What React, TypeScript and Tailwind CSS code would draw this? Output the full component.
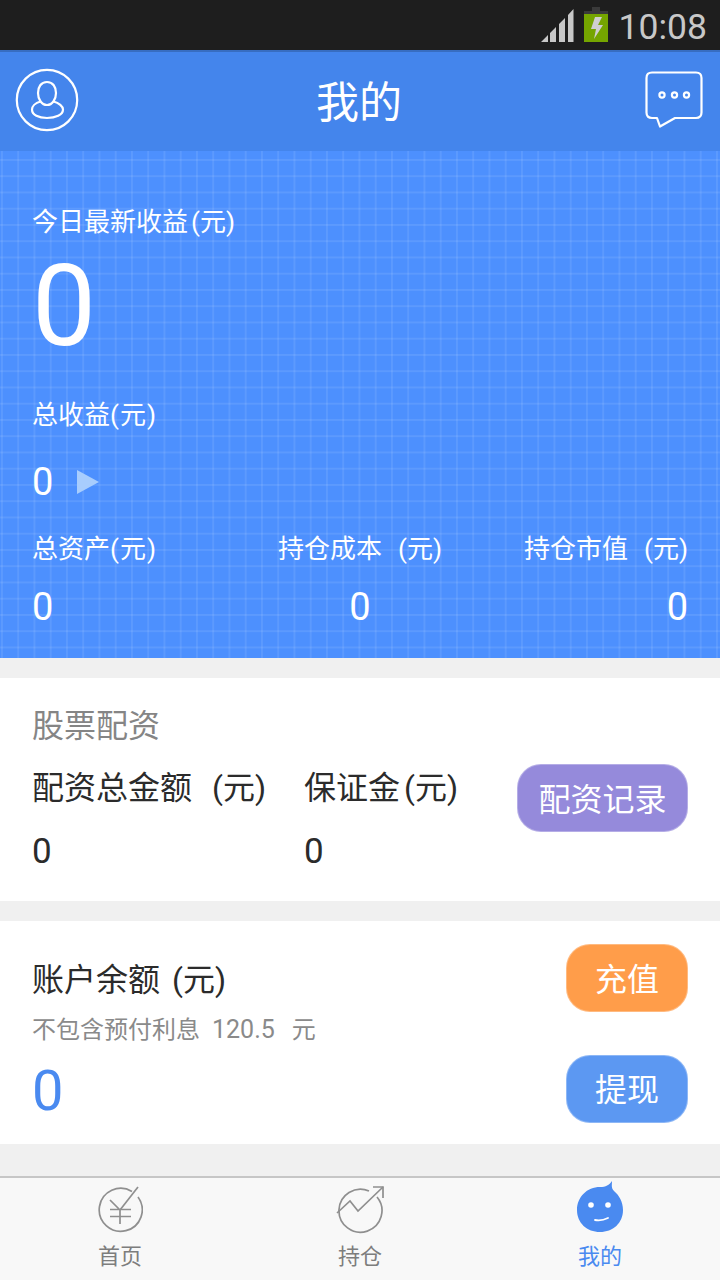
const font = { fontFamily: '"Roboto", "Noto Sans CJK SC", sans-serif' };

function SignalIcon() {
  return (
    <svg width="34" height="34" viewBox="0 0 34 34" className="mt-[9px]">
      <path d="M1 33 L8 33 L8 26 Z M10 33 L16 33 L16 18 L10 24 Z M19 33 L25 33 L25 9 L19 15 Z M28 33 L33.500 33 L33.500 0 L28 6 Z" fill="#c8c8c8" />
    </svg>
  );
}

function BatteryIcon() {
  return (
    <svg width="24" height="36" viewBox="0 0 24 36" className="mt-[6px]">
      <rect x="8" y="1" width="8" height="4" fill="#3a3a3a" />
      <rect x="0" y="5" width="24" height="31" fill="#75a500" />
      <rect x="0" y="5" width="24" height="3" fill="#3a3a3a" />
      <path d="M11 11 L18 11 L14 19 L19 19 L10 33 L12 23 L7 23 Z" fill="#cfcfcf" />
    </svg>
  );
}

function UserIcon() {
  return (
    <svg width="64" height="64" viewBox="0 0 64 64" fill="none" stroke="white">
      <circle cx="32" cy="32" r="30.2" strokeWidth="2.2" />
      <path d="M32 14 C26 14 23 19 23 25 C23 31 26.500 37 32 37 C37.500 37 41 31 41 25 C41 19 38 14 32 14 Z" strokeWidth="2.2" />
      <path d="M25.500 33.500 C20 35 17 38.500 17 41.500 C17 47 23.500 50 32 50 C40.500 50 48 47 48 41.500 C48 38.500 44 35 38.500 33.500" strokeWidth="2.2" />
    </svg>
  );
}

function ChatIcon() {
  return (
    <svg width="58" height="57" viewBox="0 0 58 57" fill="none" stroke="white">
      <path d="M7 1.500 H51 Q56.500 1.500 56.500 7 V41.500 Q56.500 47 51 47 H30 L15 55.500 L12 47 H7 Q1.500 47 1.500 41.500 V7 Q1.500 1.500 7 1.500 Z" strokeWidth="2.2" strokeLinejoin="round" />
      <circle cx="17" cy="24" r="2.600" strokeWidth="2.200" />
      <circle cx="29.500" cy="24" r="2.600" strokeWidth="2.200" />
      <circle cx="41.500" cy="24" r="2.600" strokeWidth="2.200" />
    </svg>
  );
}

function HomeIcon() {
  return (
    <svg width="46" height="48" viewBox="0 0 46 48" fill="none" stroke="#8f8f8f" strokeWidth="1.700">
      <path d="M35 5.500 A21.500 21.500 0 1 0 41 11" />
      <path d="M41 1 L23 24" />
      <path d="M13 14 L23 24 M13 23.500 H34 M13 30.500 H34 M23 24 V38" />
    </svg>
  );
}

function PositionIcon() {
  return (
    <svg width="48" height="48" viewBox="0 0 48 48" fill="none" stroke="#8f8f8f" strokeWidth="1.700">
      <path d="M33 5 A21.500 21.500 0 1 0 41 11" />
      <path d="M1 27 L14 15 L22 25 L47 1" />
      <path d="M37 1 H47 V12" />
    </svg>
  );
}

function MineIcon() {
  return (
    <svg width="46" height="52" viewBox="0 0 46 52" className="mb-[2px]">
      <path d="M35 1 C35 5 34 8 37 11 C42 15 46 22 46 30 C46 43 36 52 23 52 C10 52 0 43 0 30 C0 17 10 7 23 7 C29 7 32 5 35 1 Z" fill="#4a8af0" />
      <circle cx="14" cy="25" r="2.800" fill="white" />
      <circle cx="31" cy="25" r="2.800" fill="white" />
      <path d="M18 40 C23 41 27 40 31 38" fill="none" stroke="white" strokeWidth="1.800" strokeLinecap="round" />
    </svg>
  );
}

function HeroStat({ label, gap, align }: { label: string; gap?: boolean; align: string }) {
  return (
    <div className={`flex flex-col ${align}`}>
      <div className="text-[26px] leading-[34px] text-white">
        {label}
        <span className={gap ? "ml-[16px]" : "tracking-[1px]"}>(元)</span>
      </div>
      <div className="mt-[17px] text-[38px] leading-[48px] text-white">0</div>
    </div>
  );
}

function Tab({ icon, label, color }: { icon: React.ReactNode; label: string; color: string }) {
  return (
    <div className="flex flex-col items-center">
      <div className="flex h-[56px] items-end">{icon}</div>
      <div className={`mt-[8px] text-[22px] leading-[30px] ${color}`}>{label}</div>
    </div>
  );
}

export default function App() {
  return (
    <div className="flex h-[1280px] w-[720px] flex-col overflow-hidden bg-[#f0f0f0]" style={font}>
      {/* status bar */}
      <div className="flex h-[50px] items-start justify-end bg-[#1e1e1e] pr-[13px]">
        <SignalIcon />
        <div className="ml-[10px]"><BatteryIcon /></div>
        <div className="ml-[11px] text-[35.500px] leading-[54px] text-[#c8c8c8]">10:08</div>
      </div>

      {/* header */}
      <div className="flex h-[101px] items-center justify-between bg-[#4485ec] pl-[15px] pr-[17px] shadow-[inset_0_2px_0_rgba(0,0,0,0.18)]">
        <div className="mb-[2px] w-[64px]"><UserIcon /></div>
        <div className="mt-[4px] text-[43px] leading-[56px] text-white">我的</div>
        <div className="mb-[2px] flex w-[64px] justify-end"><ChatIcon /></div>
      </div>

      {/* earnings */}
      <div className="h-[507px] bg-[#4d90fe] bg-[linear-gradient(rgba(255,255,255,0.085)_1.500px,transparent_1.500px),linear-gradient(90deg,rgba(255,255,255,0.085)_1.500px,transparent_1.500px)] bg-[size:16.250px_16.250px] bg-[position:1px_8px] px-[32px] pt-[54px]">
        <div className="text-[26px] leading-[34px] text-white">今日最新收益<span className="ml-[3px]">(元)</span></div>
        <div className="mt-[1px] h-[112px] text-[114px] leading-[132px] text-white">0</div>
        <div className="mt-[46px] text-[26px] leading-[34px] text-white">总收益<span className="tracking-[1px]">(元)</span></div>
        <div className="mt-[24px] flex h-[52px] items-center">
          <span className="text-[38px] leading-[48px] text-white">0</span>
          <svg width="22" height="24" viewBox="0 0 22 24" className="ml-[24px]">
            <path d="M0 0 L22 12 L0 24 Z" fill="#a8cdfd" />
          </svg>
        </div>
        <div className="mt-[24px] grid grid-cols-3">
          <HeroStat label="总资产" align="items-start" />
          <HeroStat label="持仓成本" gap align="items-center" />
          <HeroStat label="持仓市值" gap align="items-end" />
        </div>
      </div>

      {/* margin */}
      <div className="mt-[20px] flex h-[223px] justify-between bg-white px-[32px] pt-[27px]">
        <div>
          <div className="text-[32px] leading-[42px] text-[#858585]">股票配资</div>
          <div className="mt-[20px] flex">
            <div className="w-[272px]">
              <div className="text-[32px] leading-[42px] text-[#2b2b2b]">配资总金额<span className="ml-[20px]">(元)</span></div>
              <div className="mt-[21px] text-[35px] leading-[44px] text-[#2b2b2b]">0</div>
            </div>
            <div>
              <div className="text-[32px] leading-[42px] text-[#2b2b2b]">保证金<span className="ml-[4px]">(元)</span></div>
              <div className="mt-[21px] text-[35px] leading-[44px] text-[#2b2b2b]">0</div>
            </div>
          </div>
        </div>
        <div className="mt-[59px] flex h-[68px] w-[171px] items-center justify-center rounded-[24px] border border-white/30 bg-[#958adb] pt-[3px] text-[32px] text-white">
          配资记录
        </div>
      </div>

      {/* balance */}
      <div className="mt-[20px] flex h-[223px] justify-between bg-white px-[32px] pt-[23px]">
        <div>
          <div className="mt-[15px] text-[32px] leading-[42px] text-[#2b2b2b]">账户余额<span className="ml-[12px]">(元)</span></div>
          <div className="mt-[13px] flex text-[24px] leading-[32px] text-[#8a8a8a]">
            不包含预付利息<span className="ml-[12px] text-[25px]">120.5</span><span className="ml-[17px]">元</span>
          </div>
          <div className="mt-[10px] text-[56px] leading-[70px] text-[#4a8af0]">0</div>
        </div>
        <div className="flex flex-col gap-[43px]">
          <div className="flex h-[68px] w-[122px] items-center justify-center rounded-[24px] border border-white/30 bg-[#ff9d4a] pt-[3px] text-[32px] text-white">充值</div>
          <div className="flex h-[68px] w-[122px] items-center justify-center rounded-[24px] border border-white/30 bg-[#5c98f2] pt-[1px] text-[32px] text-white">提现</div>
        </div>
      </div>

      {/* tabs */}
      <div className="mt-auto grid h-[104px] grid-cols-3 border-t-2 border-[#c6c6c6] bg-[#f8f8f8]">
        <Tab icon={<HomeIcon />} label="首页" color="text-[#7d7d7d]" />
        <Tab icon={<PositionIcon />} label="持仓" color="text-[#7d7d7d]" />
        <Tab icon={<MineIcon />} label="我的" color="text-[#4a8af0]" />
      </div>
    </div>
  );
}
